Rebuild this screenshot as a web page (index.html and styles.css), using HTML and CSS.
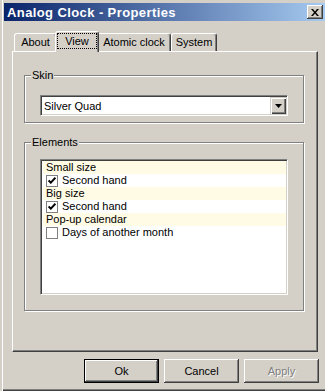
FILE: index.html
```html
<!DOCTYPE html>
<html>
<head lang="en">
    <meta charset="UTF-8">
    <title>Analog Clock - Properties</title>
    <link rel="stylesheet" href="styles.css">
</head>
<body>
<div class="window">
    <div class="titlebar">
        <span class="title">Analog Clock - Properties</span>
        <div class="close">
            <svg width="8" height="7" viewBox="0 0 8 7"><path d="M0 0h2l2 2.5 2-2.5h2l-3 3.5 3 3.5h-2l-2-2.5-2 2.5h-2l3-3.5z" fill="#000"/></svg>
        </div>
    </div>
    <div class="content">
        <div class="tabs">
            <div class="tab tab-about">About</div>
            <div class="tab tab-view current"><span class="focus">View</span></div>
            <div class="tab tab-atomic">Atomic clock</div>
            <div class="tab tab-system">System</div>
        </div>
        <div class="panel">
            <div class="group skin">
                <span class="legend">Skin</span>
                <div class="combo">
                    <span class="combo-text">Silver Quad</span>
                    <div class="combo-btn">
                        <svg width="7" height="4" viewBox="0 0 7 4"><path d="M0 0h7l-3.5 4z" fill="#000"/></svg>
                    </div>
                </div>
            </div>
            <div class="group elements">
                <span class="legend">Elements</span>
                <div class="list">
                    <div class="row head">Small size</div>
                    <div class="row"><span class="check"><svg width="8" height="7" viewBox="0 0 8 7"><path d="M0.6 3.4l2.2 2.3 4.6-5" stroke="#000" stroke-width="1.9" fill="none"/></svg></span>Second hand</div>
                    <div class="row head">Big size</div>
                    <div class="row"><span class="check"><svg width="8" height="7" viewBox="0 0 8 7"><path d="M0.6 3.4l2.2 2.3 4.6-5" stroke="#000" stroke-width="1.9" fill="none"/></svg></span>Second hand</div>
                    <div class="row head">Pop-up calendar</div>
                    <div class="row"><span class="check"></span>Days of another month</div>
                </div>
            </div>
        </div>
        <div class="buttons">
            <div class="btn default">Ok</div>
            <div class="btn">Cancel</div>
            <div class="btn disabled">Apply</div>
        </div>
    </div>
</div>
</body>
</html>
```

FILE: styles.css
```css
html, body{
    margin: 0;
    background: #d4d0c8;
}
body{
    font-family: "Liberation Sans", Arial, sans-serif;
    font-size: 11px;
    color: #000;
}
.window{
    width: 325px;
    height: 391px;
    box-sizing: border-box;
    padding: 3px 0 0 4px;
    box-shadow: inset 2px 0 #d4d0c8, inset 3px 0 #fff, inset 0 -1px #404040, inset 0 -2px #808080;
}
.titlebar{
    height: 18px;
    display: flex;
    align-items: center;
    justify-content: space-between;
    padding: 0 2px 0 3px;
    background: linear-gradient(to right, #0a246a, #a6caf0);
}
.title{
    color: #fff;
    font-weight: bold;
    font-size: 13px;
    letter-spacing: 0.4px;
}
.close{
    width: 16px;
    height: 14px;
    box-sizing: border-box;
    background: #d4d0c8;
    display: flex;
    align-items: center;
    justify-content: center;
    box-shadow: inset -1px -1px #404040, inset 1px 1px #fff, inset -2px -2px #808080;
}
.content{
    margin-left: 8px;
}
.tabs{
    margin-top: 10px;
    height: 20px;
    display: flex;
    align-items: flex-end;
    padding-left: 2px;
    position: relative;
    z-index: 1;
}
.tab{
    height: 18px;
    box-sizing: border-box;
    border-top: 1px solid #fff;
    border-left: 1px solid #fff;
    border-right: 1px solid #404040;
    box-shadow: inset -1px 0 #808080;
    border-radius: 3px 3px 0 0;
    text-align: center;
    line-height: 16px;
    background: #d4d0c8;
}
.tab-about{ width: 43px; }
.tab-atomic{ width: 74px; }
.tab-system{ width: 46px; }
.tab.current{
    width: 44px;
    height: 21px;
    margin: 0 -2px -1px;
    position: relative;
    z-index: 2;
    padding: 1px 1px 0;
}
.focus{
    display: block;
    height: 16px;
    box-sizing: border-box;
    border: 1px dotted #000;
    line-height: 14px;
}
.panel{
    width: 306px;
    height: 301px;
    box-sizing: border-box;
    border-top: 1px solid #fff;
    border-left: 1px solid #fff;
    border-right: 1px solid #404040;
    border-bottom: 1px solid #404040;
    box-shadow: inset -1px -1px #808080;
    padding: 23px 12px 0 11px;
}
.group{
    position: relative;
    border: 1px solid #808080;
    box-shadow: inset 1px 1px #fff, 1px 1px #fff;
    margin-right: 1px;
}
.legend{
    position: absolute;
    left: 6px;
    top: -7px;
    padding: 0 1px;
    line-height: 13px;
    background: #d4d0c8;
}
.skin{
    height: 48px;
    box-sizing: border-box;
    padding: 19px 15px 0 15px;
}
.elements{
    margin-top: 19px;
    height: 169px;
    box-sizing: border-box;
    padding: 16px 15px 0 15px;
}
.combo{
    height: 21px;
    box-sizing: border-box;
    background: #fff;
    border-top: 1px solid #808080;
    border-left: 1px solid #808080;
    border-right: 1px solid #fff;
    border-bottom: 1px solid #fff;
    box-shadow: inset 1px 1px #404040, inset -1px -1px #d4d0c8;
    padding: 1px;
    display: flex;
    align-items: center;
}
.combo-text{
    flex: 1;
    padding-left: 2px;
}
.combo-btn{
    width: 16px;
    height: 17px;
    box-sizing: border-box;
    background: #d4d0c8;
    box-shadow: inset 1px 1px #d4d0c8, inset 2px 2px #fff, inset -1px -1px #404040, inset -2px -2px #808080;
    display: flex;
    align-items: center;
    justify-content: center;
}
.list{
    height: 136px;
    box-sizing: border-box;
    background: #fff;
    border-top: 1px solid #808080;
    border-left: 1px solid #808080;
    border-right: 1px solid #fff;
    border-bottom: 1px solid #fff;
    box-shadow: inset 1px 1px #404040, inset -1px -1px #d4d0c8;
    padding: 1px 1px 1px 2px;
}
.row{
    height: 13px;
    line-height: 13px;
    padding-left: 3px;
    display: flex;
    align-items: center;
}
.row.head{
    background: #fffbe4;
}
.check{
    width: 12px;
    height: 12px;
    box-sizing: border-box;
    border: 1px solid #808080;
    background: #fff;
    margin-right: 4px;
    display: flex;
    align-items: center;
    justify-content: center;
}
.buttons{
    width: 307px;
    margin-top: 7px;
    display: flex;
    justify-content: flex-end;
    gap: 5px;
}
.btn{
    width: 75px;
    height: 24px;
    box-sizing: border-box;
    text-align: center;
    line-height: 24px;
    box-shadow: inset -1px -1px #404040, inset 1px 1px #fff, inset -2px -2px #808080;
}
.btn.default{
    border: 1px solid #000;
    line-height: 22px;
}
.btn.disabled{
    color: #808080;
    text-shadow: 1px 1px #fff;
}
```
